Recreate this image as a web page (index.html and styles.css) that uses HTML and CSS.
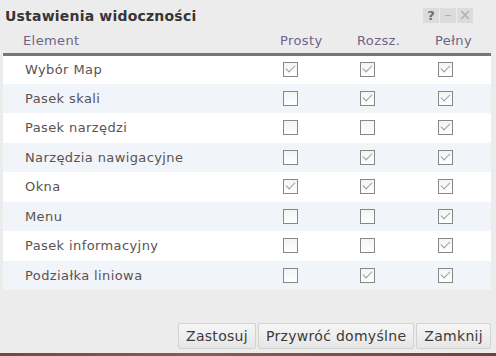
FILE: index.html
```html
<!DOCTYPE html>
<html lang="pl">
    <head>
        <meta charset="UTF-8">
        <title>Ustawienia widoczności</title>
        <link rel="stylesheet" href="styles.css">
    </head>
<body>
    <div class="dialog">
        <div class="titlebar">
            <span class="title">Ustawienia widoczności</span>
            <div class="tools">
                <span class="tool help">?</span>
                <span class="tool">&ndash;</span>
                <span class="tool">&times;</span>
            </div>
        </div>

        <table class="grid">
            <thead>
                <tr>
                    <th class="name">Element</th>
                    <th class="c1">Prosty</th>
                    <th class="c2">Rozsz.</th>
                    <th class="c3">Pełny</th>
                </tr>
            </thead>
            <tbody>
                <tr><td class="name">Wybór Map</td><td><i class="cb on"></i></td><td><i class="cb on"></i></td><td><i class="cb on"></i></td></tr>
                <tr><td class="name">Pasek skali</td><td><i class="cb"></i></td><td><i class="cb on"></i></td><td><i class="cb on"></i></td></tr>
                <tr><td class="name">Pasek narzędzi</td><td><i class="cb"></i></td><td><i class="cb"></i></td><td><i class="cb on"></i></td></tr>
                <tr><td class="name">Narzędzia nawigacyjne</td><td><i class="cb"></i></td><td><i class="cb on"></i></td><td><i class="cb on"></i></td></tr>
                <tr><td class="name">Okna</td><td><i class="cb on"></i></td><td><i class="cb on"></i></td><td><i class="cb on"></i></td></tr>
                <tr><td class="name">Menu</td><td><i class="cb"></i></td><td><i class="cb"></i></td><td><i class="cb on"></i></td></tr>
                <tr><td class="name">Pasek informacyjny</td><td><i class="cb"></i></td><td><i class="cb"></i></td><td><i class="cb on"></i></td></tr>
                <tr><td class="name">Podziałka liniowa</td><td><i class="cb"></i></td><td><i class="cb on"></i></td><td><i class="cb on"></i></td></tr>
            </tbody>
        </table>

        <div class="footer">
            <button>Zastosuj</button>
            <button>Przywróć domyślne</button>
            <button>Zamknij</button>
        </div>
    </div>
    <div class="map-edge"></div>
</body>
</html>
```

FILE: styles.css
```css
* {
    margin: 0;
    padding: 0;
    box-sizing: border-box;
}

body {
    width: 496px;
    height: 356px;
    overflow: hidden;
    background: #ececec;
    font-family: "DejaVu Sans", Verdana, sans-serif;
}

.dialog {
    height: 353px;
    display: flex;
    flex-direction: column;
    padding: 0 5px 0 3px;
}

.titlebar {
    height: 30px;
    display: flex;
    align-items: center;
    justify-content: space-between;
    padding: 1px 18px 0 2px;
}

.title {
    font-size: 14px;
    font-weight: bold;
    letter-spacing: 0.2px;
    color: #3a3434;
}

.tools {
    display: flex;
    gap: 1px;
}

.tool {
    width: 16px;
    height: 15px;
    background: #dcdcdc;
    color: #b0b0b0;
    font-size: 15px;
    line-height: 15px;
    text-align: center;
}

.tool.help {
    color: #707070;
    font-size: 13px;
    font-weight: bold;
}

.grid {
    border-collapse: collapse;
    width: 488px;
    table-layout: fixed;
    font-size: 13px;
    letter-spacing: 0.4px;
}

.grid th {
    height: 24px;
    text-align: left;
    font-weight: normal;
    color: #6f6488;
    border-bottom: 3px solid #767676;
    padding-bottom: 2px;
}

.grid th.name {
    width: 277px;
    padding-left: 20px;
}

.grid th.c1 { width: 77px; }
.grid th.c2 { width: 78px; }

.grid td {
    height: 29.5px;
    background: #fff;
    vertical-align: middle;
    padding-left: 3px;
}

.grid tbody tr:nth-child(even) td {
    background: #f1f4f9;
}

.grid td.name {
    padding-left: 22px;
    color: #5b5252;
}

.cb {
    display: block;
    position: relative;
    width: 15px;
    height: 15px;
    border: 1.5px solid #878787;
    background: linear-gradient(#f4f4f4, #fff);
}

/* check mark drawn over the box */
.cb.on::after {
    content: "";
    position: absolute;
    left: 4px;
    top: 0px;
    width: 4px;
    height: 8px;
    border-right: 1.3px solid #9a9a9a;
    border-bottom: 1.3px solid #9a9a9a;
    transform: rotate(45deg);
}

.footer {
    flex: 1;
    display: flex;
    justify-content: flex-end;
    align-items: flex-end;
    gap: 2px;
    padding-bottom: 4px;
}

.footer button {
    height: 26px;
    padding: 0 7px;
    border: 1px solid #d2d2d2;
    border-radius: 2px;
    background: linear-gradient(#f6f6f6, #e6e6e6);
    font-family: "DejaVu Sans", Verdana, sans-serif;
    font-size: 14px;
    letter-spacing: 0.3px;
    color: #3b3b3b;
}

.map-edge {
    height: 3px;
    background: linear-gradient(90deg, #7b4444, #8c5a5a 40%, #6e4040);
}
```
